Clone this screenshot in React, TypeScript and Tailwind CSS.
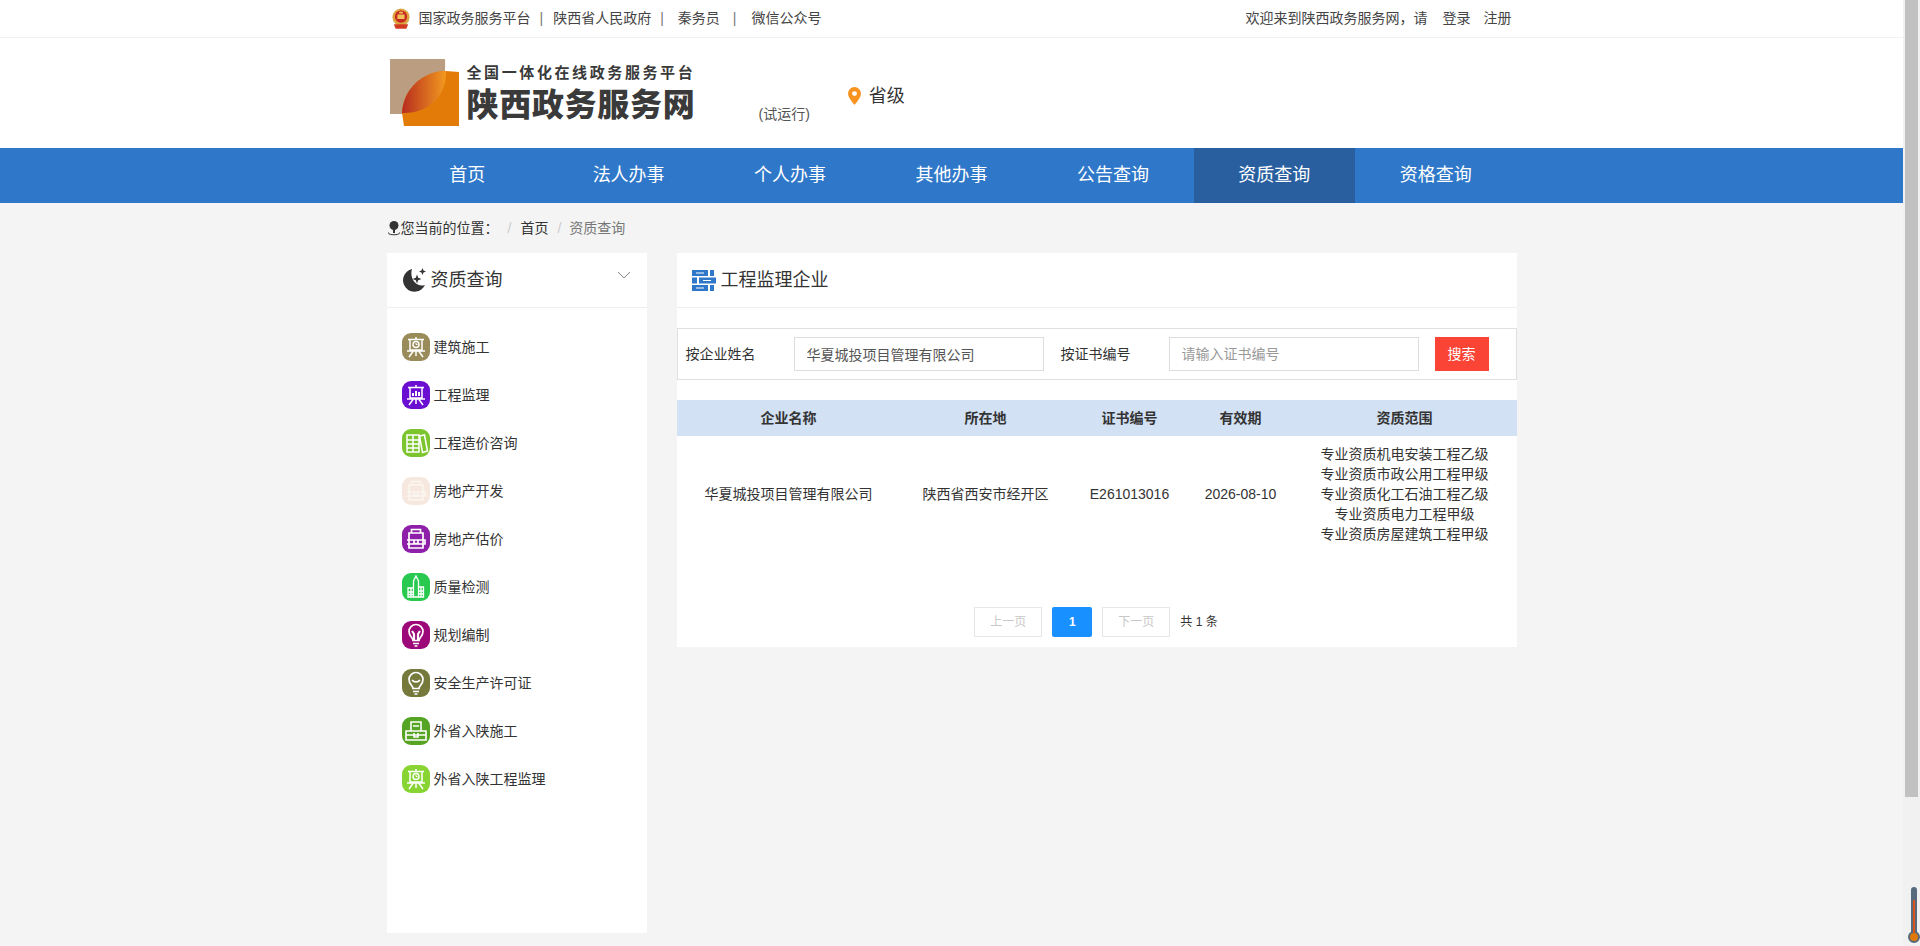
import type { ReactNode } from "react";

const navItems = ["首页", "法人办事", "个人办事", "其他办事", "公告查询", "资质查询", "资格查询"];

function Board({ chart }: { chart?: boolean }) {
    return (
        <svg viewBox="0 0 28 28" className="h-7 w-7" fill="none" stroke="currentColor" strokeWidth="1.5">
            <path d="M6 6.500h16M8 6.500v10.500h12V6.500M14 4v2.500M5 18h18M11 18.500l-4 5.500M17 18.500l4 5.500M14 18.500v4.500" />
            {chart ? <path d="M11 15v-3M14 15v-5M17 15v-4" strokeWidth="2" /> : <><circle cx="14" cy="11.500" r="3" /><path d="M14 10v1.500h1.500" strokeWidth="1" /></>}
        </svg>
    );
}

function Books() {
    return (
        <svg viewBox="0 0 28 28" className="h-7 w-7" fill="none" stroke="currentColor" strokeWidth="1.500">
            <path d="M5 6h6v17H5zM11 6h6v17h-6zM17.500 7l5-1 3 16-5 1.500zM5 11h12M5 15h12M5 19h12" />
        </svg>
    );
}

function Case() {
    return (
        <svg viewBox="0 0 28 28" className="h-7 w-7" fill="none" stroke="currentColor" strokeWidth="1.700">
            <path d="M9.500 8V4.500h9V8M7 8h14v15H7zM5 15h18v4H5M12 15.500v3h4v-3" />
        </svg>
    );
}

function City() {
    return (
        <svg viewBox="0 0 28 28" className="h-7 w-7" fill="none" stroke="currentColor" strokeWidth="1.300">
            <path d="M14 3l2.500 5v6h5v10H6v-9h5.500V8zM6 19h5.500M6 21.500h5.500M9 15v9M11.500 15v9M16.500 14v10M16.500 18h5M16.500 21h5M19 14v10" />
        </svg>
    );
}

function Bulb({ face }: { face?: boolean }) {
    return (
        <svg viewBox="0 0 28 28" className="h-7 w-7" fill="none" stroke="currentColor" strokeWidth="1.700">
            <path d="M11 19.500c0-3-4-4-4-9a7 7 0 0 1 14 0c0 5-4 6-4 9zM11 22.500h6M12.500 25h3" />
            {face ? <path d="M10 11c2 2.500 6 2.500 8 0" /> : <path d="M10 10l2 3v6M18 10l-2 3v6" strokeWidth="2.200" />}
        </svg>
    );
}

function Kit() {
    return (
        <svg viewBox="0 0 28 28" className="h-7 w-7" fill="none" stroke="currentColor" strokeWidth="1.600">
            <path d="M9 14V5h10v9M11 9h6M4 14h20v9H4zM4 18h20M12 16v4h4v-4" />
        </svg>
    );
}

type Cat = { name: string; color: string; icon: ReactNode; text?: string };

const categories: Cat[] = [
    { name: "建筑施工", color: "bg-[#9a8b5b]", icon: <Board /> },
    { name: "工程监理", color: "bg-[#6a0fd1]", icon: <Board chart /> },
    { name: "工程造价咨询", color: "bg-[#7cc52f]", icon: <Books /> },
    { name: "房地产开发", color: "bg-[#f6e8de]", icon: <Case />, text: "text-[#fbf5f0]" },
    { name: "房地产估价", color: "bg-[#8e1fa8]", icon: <Case /> },
    { name: "质量检测", color: "bg-[#29c94f]", icon: <City /> },
    { name: "规划编制", color: "bg-[#9b0a78]", icon: <Bulb /> },
    { name: "安全生产许可证", color: "bg-[#757a3c]", icon: <Bulb face /> },
    { name: "外省入陕施工", color: "bg-[#55a423]", icon: <Kit /> },
    { name: "外省入陕工程监理", color: "bg-[#88d433]", icon: <Board /> },
];

const scopes = [
    "专业资质机电安装工程乙级",
    "专业资质市政公用工程甲级",
    "专业资质化工石油工程乙级",
    "专业资质电力工程甲级",
    "专业资质房屋建筑工程甲级",
];

export default function App() {
    return (
        <div className="relative flex h-[946px] overflow-hidden bg-[#f4f4f4] font-['Liberation_Sans','Noto_Sans_CJK_SC',sans-serif] text-[#333]">
            <div className="min-w-0 flex-1">
                {/* top bar */}
                <div className="h-[38px] border-b border-[#f2f2f2] bg-white">
                    <div className="mx-auto flex h-[37px] w-[1130px] items-center justify-between text-[14px] text-[#444]">
                        <div className="flex items-center pl-[5px]">
                            <svg viewBox="0 0 20 23" className="mr-[9px] h-[21px] w-[18px]">
                                <circle cx="10" cy="10" r="9.500" fill="#dca53f" />
                                <circle cx="10" cy="9.500" r="6.800" fill="#c8281e" />
                                <path d="M8 4h4v2h-4zM6 7h8v5H6z" fill="#efc35a" />
                                <path d="M2 18h16l-2 5H4z" fill="#d23b22" />
                            </svg>
                            <span>国家政务服务平台</span>
                            <span className="ml-[9px] text-[#777]">|</span>
                            <span className="ml-[10px]">陕西省人民政府</span>
                            <span className="ml-[9px] text-[#777]">|</span>
                            <span className="ml-[14px]">秦务员</span>
                            <span className="ml-[13px] text-[#777]">|</span>
                            <span className="ml-[15px]">微信公众号</span>
                        </div>
                        <div className="flex pr-[5px]">
                            <span>欢迎来到陕西政务服务网，请</span>
                            <span className="ml-[15px]">登录</span>
                            <span className="ml-[13px]">注册</span>
                        </div>
                    </div>
                </div>

                {/* logo row */}
                <div className="h-[110px] bg-white">
                    <div className="mx-auto flex h-full w-[1130px] items-start">
                        <svg viewBox="0 0 69 67" className="ml-[3px] mt-[21px] h-[67px] w-[69px] shrink-0">
                            <defs>
                                <linearGradient id="leaf" x1="0" y1="0" x2="1" y2="0">
                                    <stop offset="0" stopColor="#b72c20" />
                                    <stop offset="1" stopColor="#f29a1f" />
                                </linearGradient>
                            </defs>
                            <path d="M0 0H55C57 35 40 55 12 55H0Z" fill="#bb9e81" />
                            <path d="M56 12L69 13V67H14L12 54C13 30 33 12 56 12Z" fill="#e37b08" />
                            <path d="M12 54C13 30 33 12 56 12C57 35 40 55 12 54Z" fill="url(#leaf)" />
                        </svg>
                        <div className="ml-[8px] mt-[24px] w-[229px] shrink-0 whitespace-nowrap font-bold text-[#3a3a3a]">
                            <div className="text-[15px] leading-[22px] tracking-[2.600px]">全国一体化在线政务服务平台</div>
                            <div className="text-[32px] font-black leading-[42px] tracking-[0.700px]">陕西政务服务网</div>
                        </div>
                        <div className="ml-[63px] mt-[66px] text-[14px] leading-[20px] text-[#555]">(试运行)</div>
                        <div className="ml-[38px] mt-[44px] flex items-center text-[18px] leading-[28px]">
                            <svg viewBox="0 0 16 22" className="mr-[8px] h-[18px] w-[13px]">
                                <path d="M8 0a8 8 0 0 0-8 8c0 5.500 8 14 8 14s8-8.500 8-14a8 8 0 0 0-8-8z" fill="#f7931e" />
                                <circle cx="8" cy="8" r="3" fill="#fff" />
                            </svg>
                            省级
                        </div>
                    </div>
                </div>

                {/* nav */}
                <div className="h-[55px] bg-[#2f78c9]">
                    <div className="mx-auto flex h-full w-[1130px]">
                        {navItems.map((item) => (
                            <div
                                key={item}
                                className={`flex w-[161.500px] items-center justify-center text-[18px] text-white ${item === "资质查询" ? "bg-[#295f9f]" : ""}`}
                            >
                                {item}
                            </div>
                        ))}
                    </div>
                </div>

                <div className="mx-auto w-[1130px]">
                    {/* breadcrumb */}
                    <div className="flex h-[50px] items-center text-[14px]">
                        <svg viewBox="0 0 14 16" className="h-[16px] w-[14px] shrink-0 text-[#333]" fill="currentColor">
                            <circle cx="7" cy="5.500" r="4.500" />
                            <path d="M6 9h2v4H6z" />
                            <path d="M1.500 12.500c-1.500 3 12.500 3 11 0" fill="none" stroke="currentColor" strokeWidth="1" />
                        </svg>
                        <span>您当前的位置：</span>
                        <span className="ml-[9px] text-[#ccc]">/</span>
                        <span className="ml-[9px]">首页</span>
                        <span className="ml-[9px] text-[#ccc]">/</span>
                        <span className="ml-[8px] text-[#777]">资质查询</span>
                    </div>

                    <div className="flex items-start gap-[30px]">
                        {/* sidebar */}
                        <div className="h-[680px] w-[260px] shrink-0 bg-white">
                            <div className="flex h-[55px] items-center justify-between border-b border-[#eee] pl-[15px] pr-[16px]">
                                <div className="flex items-center gap-[5px] text-[18px]">
                                    <svg viewBox="0 0 24 24" className="h-[24px] w-[24px] text-[#333]" fill="currentColor">
                                        <path d="M10 1A11.500 11.500 0 1 0 23 17C15 20 7 11 10 1z" />
                                        <path d="M20.500 0l1 2.500L24 3.500l-2.500 1-1 2.500-1-2.500-2.500-1 2.500-1zM15 6.500l1.200 3.300 3.300 1.200-3.300 1.200L15 15.500l-1.200-3.300-3.300-1.200 3.300-1.200z" />
                                    </svg>
                                    资质查询
                                </div>
                                <svg viewBox="0 0 14 8" className="mb-[10px] h-[8px] w-[14px]" fill="none" stroke="#888" strokeWidth="1">
                                    <path d="M1 1l6 6 6-6" />
                                </svg>
                            </div>
                            <div className="flex flex-col gap-[20px] px-[15px] pt-[25px]">
                                {categories.map((cat) => (
                                    <div key={cat.name} className="flex h-[28px] items-center gap-[4px] text-[14px]">
                                        <span className={`flex h-[28px] w-[28px] items-center justify-center rounded-[9px] ${cat.color} ${cat.text ?? "text-white"}`}>
                                            {cat.icon}
                                        </span>
                                        {cat.name}
                                    </div>
                                ))}
                            </div>
                        </div>

                        {/* content */}
                        <div className="h-[394px] w-[840px] bg-white">
                            <div className="flex h-[55px] items-center gap-[5px] border-b border-[#eee] pl-[15px] text-[18px]">
                                <svg viewBox="0 0 24 21" className="h-[21px] w-[24px]" fill="#2f78c9">
                                    <path d="M0 0h16v6H0zM18 0h4v6h-4zM7 7.500h17v6H7zM0 7.500h5v6H0zM0 15h16v6H0zM18 15h4v6h-4z" />
                                    <path d="M4 2.500h8v1H4zM11 10h8v1h-8zM4 17.500h8v1H4z" fill="#fff" />
                                </svg>
                                工程监理企业
                            </div>

                            <div className="mt-[20px] flex h-[52px] items-center border border-[#e0e0e0] pl-[8px] text-[14px]">
                                <span className="w-[108px]">按企业姓名</span>
                                <input
                                    readOnly
                                    value="华夏城投项目管理有限公司"
                                    className="h-[34px] w-[250px] border border-[#ddd] px-[12px] text-[14px] text-[#555] outline-none"
                                />
                                <span className="ml-[17px] w-[108px]">按证书编号</span>
                                <input
                                    readOnly
                                    placeholder="请输入证书编号"
                                    className="h-[34px] w-[250px] border border-[#ddd] px-[12px] text-[14px] outline-none placeholder:text-[#999]"
                                />
                                <button className="ml-[16px] h-[34px] w-[54px] bg-[#f94436] text-[14px] text-white">搜索</button>
                            </div>

                            <table className="mt-[20px] w-full table-fixed text-center text-[14px]">
                                <thead>
                                    <tr className="h-[36px] bg-[#d2e1f4] font-bold">
                                        <th className="w-[224px]">企业名称</th>
                                        <th className="w-[170px]">所在地</th>
                                        <th className="w-[118px]">证书编号</th>
                                        <th className="w-[104px]">有效期</th>
                                        <th>资质范围</th>
                                    </tr>
                                </thead>
                                <tbody>
                                    <tr className="h-[116px]">
                                        <td>华夏城投项目管理有限公司</td>
                                        <td>陕西省西安市经开区</td>
                                        <td>E261013016</td>
                                        <td>2026-08-10</td>
                                        <td className="leading-[20px]">
                                            {scopes.map((s) => (
                                                <div key={s}>{s}</div>
                                            ))}
                                        </td>
                                    </tr>
                                </tbody>
                            </table>

                            <div className="mt-[55px] flex items-center justify-center gap-[10px] pr-[1px] text-[12px]">
                                <span className="flex h-[30px] w-[68px] items-center justify-center border border-[#e6e6e6] text-[#c8c8c8]">上一页</span>
                                <span className="flex h-[30px] w-[40px] items-center justify-center rounded-[2px] bg-[#1890ff] font-bold text-white">1</span>
                                <span className="flex h-[30px] w-[68px] items-center justify-center border border-[#e6e6e6] text-[#c8c8c8]">下一页</span>
                                <span>共 1 条</span>
                            </div>
                        </div>
                    </div>
                </div>
            </div>

            {/* scrollbar */}
            <div className="w-[17px] shrink-0 bg-[#f1f1f1]">
                <div className="ml-[2px] h-[797px] w-[13px] bg-[#c1c1c1]" />
            </div>

            {/* thermometer badge */}
            <div className="absolute bottom-[3px] right-0 flex h-[56px] w-[12px] flex-col items-center">
                <div className="relative h-[46px] w-[6px] rounded-t-[3px] bg-[#566a7c]">
                    <div className="absolute bottom-0 left-[2px] h-[33px] w-[2px] bg-[#d9541e]" />
                </div>
                <div className="-mt-[2px] h-[12px] w-[12px] rounded-full border-2 border-[#566a7c] bg-[#e0790a]" />
            </div>
        </div>
    );
}
